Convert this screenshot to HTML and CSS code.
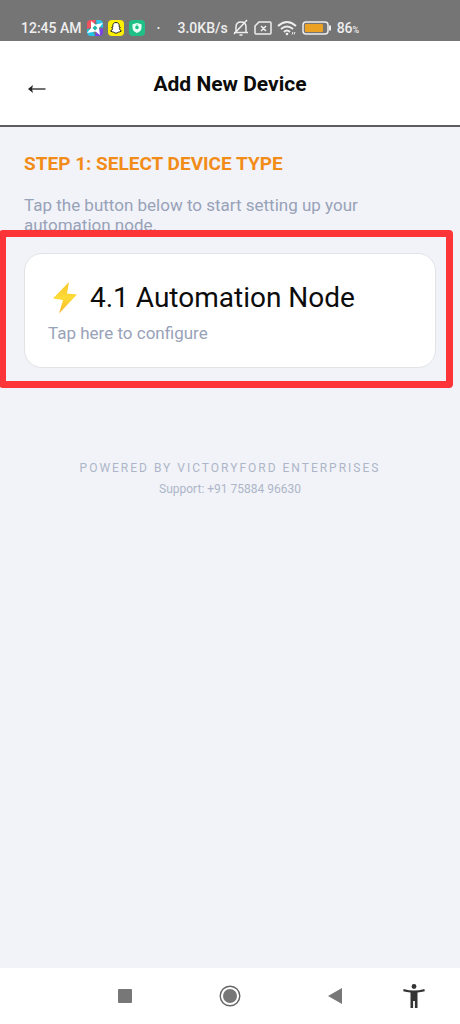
FILE: index.html
```html
<!DOCTYPE html>
<html lang="en">
<head>
    <meta charset="UTF-8">
    <meta name="viewport" content="width=device-width, initial-scale=1.0">
    <title>Add New Device</title>
    <link rel="stylesheet" href="styles.css">
</head>
<body>
    <div class="status-bar">
        <span class="clock">12:45 AM</span>
        <svg class="app-icon" viewBox="0 0 16 16" aria-hidden="true">
            <path d="M4 0h5L6 6 0 9V4a4 4 0 0 1 4-4z" fill="#f5515f"/>
            <path d="M9 0h3a4 4 0 0 1 4 4v4l-6-2z" fill="#2fc5e8"/>
            <path d="M16 8v4a4 4 0 0 1-4 4H8l2-6z" fill="#7a45e6"/>
            <path d="M8 16H4a4 4 0 0 1-4-4V9l6 1z" fill="#25c4e4"/>
            <path d="M4 1l4.500 3.500L16 3l-4 5 1 7-4.500-3.500L0 13l4-5z" fill="#fff"/>
            <path d="M8 5.500L10.500 8 8 10.500 5.500 8z" fill="#1fb5a8"/>
        </svg>
        <svg class="app-icon" viewBox="0 0 16 16" aria-hidden="true">
            <rect width="16" height="16" rx="4" fill="#fdf000"/>
            <path d="M8 2.500c-2.200 0-3.300 1.500-3.200 3.400v1.300l-1.200.3 1 1.100c-.3 1.200-1 1.900-2 2.300l1.500 1c.9-.1 1.300.1 2 .6 1.200.9 2.600.9 3.800 0 .7-.5 1.100-.7 2-.6l1.500-1c-1-.4-1.700-1.100-2-2.300l1-1.100-1.200-.3V5.900C11.300 4 10.200 2.500 8 2.500z" fill="#fff" stroke="#222"/>
        </svg>
        <svg class="app-icon" viewBox="0 0 16 16" aria-hidden="true">
            <rect width="16" height="16" rx="4" fill="#1fbf86"/>
            <path d="M8 3l4.500 1.300v3.500c0 2.500-1.800 4.200-4.500 5.200-2.700-1-4.500-2.700-4.500-5.200V4.300z" fill="#e8fff6"/>
            <circle cx="8" cy="7.500" r="1.800" fill="#1fbf86"/>
            <path d="M8 7.500V4.500" stroke="#1fbf86"/>
        </svg>
        <span class="dot">·</span>
        <span class="speed">3.0KB/s</span>
        <svg width="16" height="18" viewBox="0 0 16 18" fill="none" stroke="#eee" stroke-width="1.500" aria-hidden="true">
            <path d="M3 13V8c0-3 2-5 5-5s5 2 5 5v5M1 13.500h14M6.500 16h3M1 15L14 1"/>
        </svg>
        <svg width="18" height="14" viewBox="0 0 18 14" fill="none" stroke="#eee" stroke-width="1.500" aria-hidden="true">
            <path d="M5 1h11q1 0 1 1v10q0 1-1 1H2q-1 0-1-1V5zM7 5l5 5M12 5l-5 5"/>
        </svg>
        <svg width="20" height="16" viewBox="0 0 20 16" fill="none" stroke="#eee" stroke-width="2" aria-hidden="true">
            <path d="M1 6q9-8 18 0M4 9q6-5 12 0M7 12q3-3 6 0"/>
            <circle cx="10" cy="14" r="1.300" fill="#eee" stroke="none"/>
            <path d="M15 14.500l1-2.500M18 12l-1 2.500" stroke-width="1"/>
        </svg>
        <svg width="30" height="14" viewBox="0 0 30 14" aria-hidden="true">
            <rect x="1" y="1" width="25" height="12" rx="3" fill="none" stroke="#eee" stroke-width="1.500"/>
            <rect x="3" y="3" width="18" height="8" rx="1" fill="#eba124"/>
            <path d="M28 4.500v5" stroke="#eee" stroke-width="2"/>
        </svg>
        <span class="battery">86<small>%</small></span>
    </div>

    <header class="top-bar">
        <button class="back" type="button" aria-label="Back">
            <svg width="18" height="10" viewBox="0 0 18 10" aria-hidden="true">
                <path d="M3 5h14.500" stroke="#222" stroke-width="1.300"/>
                <path d="M0 5l5-4-1 4 1 4z" fill="#222"/>
            </svg>
        </button>
        <h1>Add New Device</h1>
    </header>

    <main>
        <h2>STEP 1: SELECT DEVICE TYPE</h2>
        <p class="hint">Tap the button below to start setting up your automation node.</p>

        <div class="highlight">
            <button class="device-card" type="button">
                <span class="device-name">
                    <svg width="34" height="32" viewBox="0 0 34 32" aria-hidden="true">
                        <defs>
                            <linearGradient id="bolt" x1="0" y1="0" x2="0" y2="1">
                                <stop offset="0" stop-color="#fbc52c"/>
                                <stop offset="0.500" stop-color="#fddb35"/>
                                <stop offset="1" stop-color="#f9b52c"/>
                            </linearGradient>
                        </defs>
                        <path d="M21 0L5 16.500l10 1.500-4 13.500L29 12.500l-10-1z" fill="url(#bolt)"/>
                    </svg>
                    4.1 Automation Node
                </span>
                <span class="device-hint">Tap here to configure</span>
            </button>
        </div>

        <footer>
            <p class="powered">POWERED BY VICTORYFORD ENTERPRISES</p>
            <p class="support">Support: +91 75884 96630</p>
        </footer>
    </main>

    <nav class="nav-bar">
        <button type="button" aria-label="Recent apps">
            <svg width="14" height="14" viewBox="0 0 14 14"><rect width="14" height="14" rx="1" fill="#777"/></svg>
        </button>
        <button type="button" aria-label="Home">
            <svg width="22" height="22" viewBox="0 0 22 22">
                <circle cx="11" cy="11" r="9.800" fill="none" stroke="#666" stroke-width="1.400"/>
                <circle cx="11" cy="11" r="7" fill="#777"/>
            </svg>
        </button>
        <button type="button" aria-label="Go back">
            <svg width="14" height="16" viewBox="0 0 14 16"><path d="M14 0v16L0 8z" fill="#777"/></svg>
        </button>
        <button type="button" aria-label="Accessibility">
            <svg width="22" height="24" viewBox="0 0 22 24" fill="#333">
                <circle cx="11" cy="2.500" r="2.400"/>
                <path d="M.6 5Q11 8 21.400 5l.4 2.200Q18 8.200 14.500 8.500V24h-2.600v-7h-1.800v7H7.500V8.500Q4 8.200.2 7.200z"/>
            </svg>
        </button>
    </nav>
</body>
</html>
```

FILE: styles.css
```css
* {
    box-sizing: border-box;
}
body {
    margin: 0;
    min-height: 100vh;
    display: flex;
    flex-direction: column;
    font-family: Roboto, "Liberation Sans", sans-serif;
    background: #f2f3f8;
    color: #0c0c0c;
}
h1, h2, p {
    margin: 0;
}
button {
    padding: 0;
    border: none;
    background: none;
    font-family: inherit;
    color: inherit;
    cursor: pointer;
}
svg {
    display: block;
    flex: none;
}
.status-bar {
    height: 41px;
    padding: 15px 20px 0 21px;
    display: flex;
    align-items: center;
    gap: 5px;
    background: #757575;
    color: #eee;
    font-size: 14px;
    font-weight: 500;
    line-height: 20px;
    white-space: nowrap;
}
.app-icon {
    width: 16px;
    height: 16px;
}
.dot {
    margin: 0 12px 0 7px;
}
.battery small {
    font-size: 9px;
    line-height: 9px;
}
.top-bar {
    min-height: 86px;
    padding: 0 28px;
    display: grid;
    grid-template-columns: 20px 1fr 20px;
    align-items: center;
    background: #fff;
    border-bottom: 2px solid #5c5c5c;
}
.back {
    padding-top: 12px;
}
h1 {
    padding-top: 2px;
    font-size: 21px;
    font-weight: 700;
    line-height: 24px;
    text-align: center;
}
main {
    flex: 1;
    padding: 24px;
}
h2 {
    color: #f28c18;
    font-size: 19px;
    font-weight: 700;
    line-height: 26px;
}
.hint {
    max-width: 360px;
    margin: 18px 0;
    color: #98a2b8;
    font-size: 17px;
    line-height: 20px;
}
.highlight {
    position: relative;
}
/* red marker frame around the card */
.highlight::after {
    content: "";
    position: absolute;
    inset: -23px -17px -20px -25px;
    border: 7px solid #fd3539;
    border-radius: 4px;
    pointer-events: none;
}
.device-card {
    display: block;
    width: 100%;
    padding: 26px 23px 24px;
    background: #fff;
    border: 1px solid #e2e3e6;
    border-radius: 18px;
    text-align: left;
}
.device-name {
    display: flex;
    align-items: center;
    gap: 8px;
    font-size: 28px;
    line-height: 36px;
}
.device-hint {
    display: block;
    margin-top: 7px;
    color: #98a2b8;
    font-size: 17px;
    line-height: 20px;
}
footer {
    margin-top: 90px;
    text-align: center;
    color: #adb6c8;
    font-size: 12px;
    line-height: 21px;
}
.powered {
    letter-spacing: 2px;
}
.nav-bar {
    height: 56px;
    padding: 0 20px 0 72px;
    display: grid;
    grid-template-columns: 2fr 2fr 2fr 1fr;
    background: #fff;
}
.nav-bar button {
    display: flex;
    align-items: center;
    justify-content: center;
}
```
